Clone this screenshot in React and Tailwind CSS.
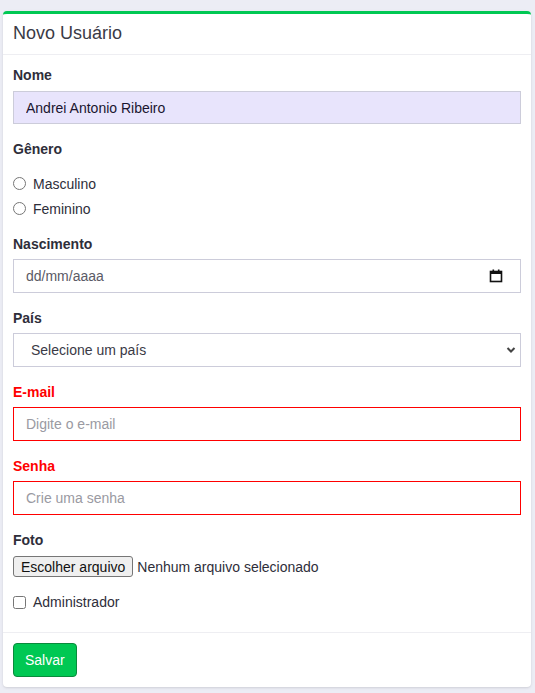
export default function App() {
  return (
    <div className="min-h-screen bg-[#ecedf5] pl-[3px] pr-[4px] pt-[11px] pb-[6px] font-['Liberation_Sans',Arial,sans-serif] text-[#2e2e3a]">
      <div className="bg-white rounded-[4px] border-t-[3px] border-[#00c853] shadow-sm overflow-hidden">
        {/* Header */}
        <div className="h-[41px] px-[10px] pb-[2px] flex items-center border-b border-[#eeeef2]">
          <h1 className="text-[18px] leading-none text-[#3a3a46]">Novo Usuário</h1>
        </div>

        {/* Body */}
        <div className="px-[10px] pt-[12px] pb-[19px]">
          <label className="block text-sm font-bold leading-4 mb-[8px]">Nome</label>
          <input
            type="text"
            defaultValue="Andrei Antonio Ribeiro"
            className="w-full h-[33px] px-[12px] text-sm text-[#1a1530] bg-[#e8e4fc] border border-[#ccccda] outline-none"
          />

          <label className="block text-sm font-bold leading-4 mt-[17px] mb-[14px]">Gênero</label>
          <div className="flex flex-col">
            <label className="h-[25px] flex items-center gap-[7px] text-sm">
              <input type="radio" name="genero" className="w-[13px] h-[13px] m-0" />
              Masculino
            </label>
            <label className="h-[25px] flex items-center gap-[7px] text-sm">
              <input type="radio" name="genero" className="w-[13px] h-[13px] m-0" />
              Feminino
            </label>
          </div>

          <label className="block text-sm font-bold leading-4 mt-[15px] mb-[7px]">Nascimento</label>
          <div className="w-full h-[34px] px-[12px] flex items-center justify-between border border-[#ccccda] text-sm text-[#5a5a66]">
            <span>dd/mm/aaaa</span>
            <svg width="14" height="14" viewBox="0 0 14 14" className="mr-[5px]">
              <rect x="1.5" y="2.5" width="11" height="10" fill="none" stroke="#111" strokeWidth="1.6" />
              <rect x="1.5" y="2.5" width="11" height="2.5" fill="#111" />
              <rect x="3.5" y="0.5" width="1.6" height="2.5" fill="#111" />
              <rect x="8.9" y="0.5" width="1.6" height="2.5" fill="#111" />
            </svg>
          </div>

          <label className="block text-sm font-bold leading-4 mt-[17px] mb-[7px]">País</label>
          <div className="w-full h-[34px] pl-[17px] pr-[4px] flex items-center justify-between border border-[#ccccda] text-sm text-[#3a3a46]">
            <span>Selecione um país</span>
            <svg width="10" height="8" viewBox="0 0 10 8">
              <path d="M1.5 2 L5 5.5 L8.5 2" fill="none" stroke="#444" strokeWidth="2" />
            </svg>
          </div>

          <label className="block text-sm font-bold leading-4 mt-[17px] mb-[7px] text-[#ff0000]">E-mail</label>
          <input
            type="email"
            placeholder="Digite o e-mail"
            className="w-full h-[34px] px-[12px] text-sm border border-[#ff0000] outline-none placeholder:text-[#9a9aa2]"
          />

          <label className="block text-sm font-bold leading-4 mt-[17px] mb-[7px] text-[#ff0000]">Senha</label>
          <input
            type="password"
            placeholder="Crie uma senha"
            className="w-full h-[34px] px-[12px] text-sm border border-[#ff0000] outline-none placeholder:text-[#9a9aa2]"
          />

          <label className="block text-sm font-bold leading-4 mt-[17px] mb-[8px]">Foto</label>
          <div className="flex items-center gap-[4px] text-sm">
            <button className="h-[21px] px-[7px] bg-[#efefef] border border-[#767676] rounded-[3px] text-sm text-[#111] leading-none">
              Escolher arquivo
            </button>
            <span>Nenhum arquivo selecionado</span>
          </div>

          <label className="mt-[14px] h-[22px] flex items-center gap-[7px] text-sm">
            <input type="checkbox" className="w-[13px] h-[13px] m-0" />
            Administrador
          </label>
        </div>

        {/* Footer */}
        <div className="border-t border-[#eeeef2] px-[10px] pt-[10px] pb-[10px]">
          <button className="h-[34px] px-[11px] bg-[#00c853] border border-[#0a8a3c] rounded-[4px] text-sm text-white">
            Salvar
          </button>
        </div>
      </div>
    </div>
  );
}
